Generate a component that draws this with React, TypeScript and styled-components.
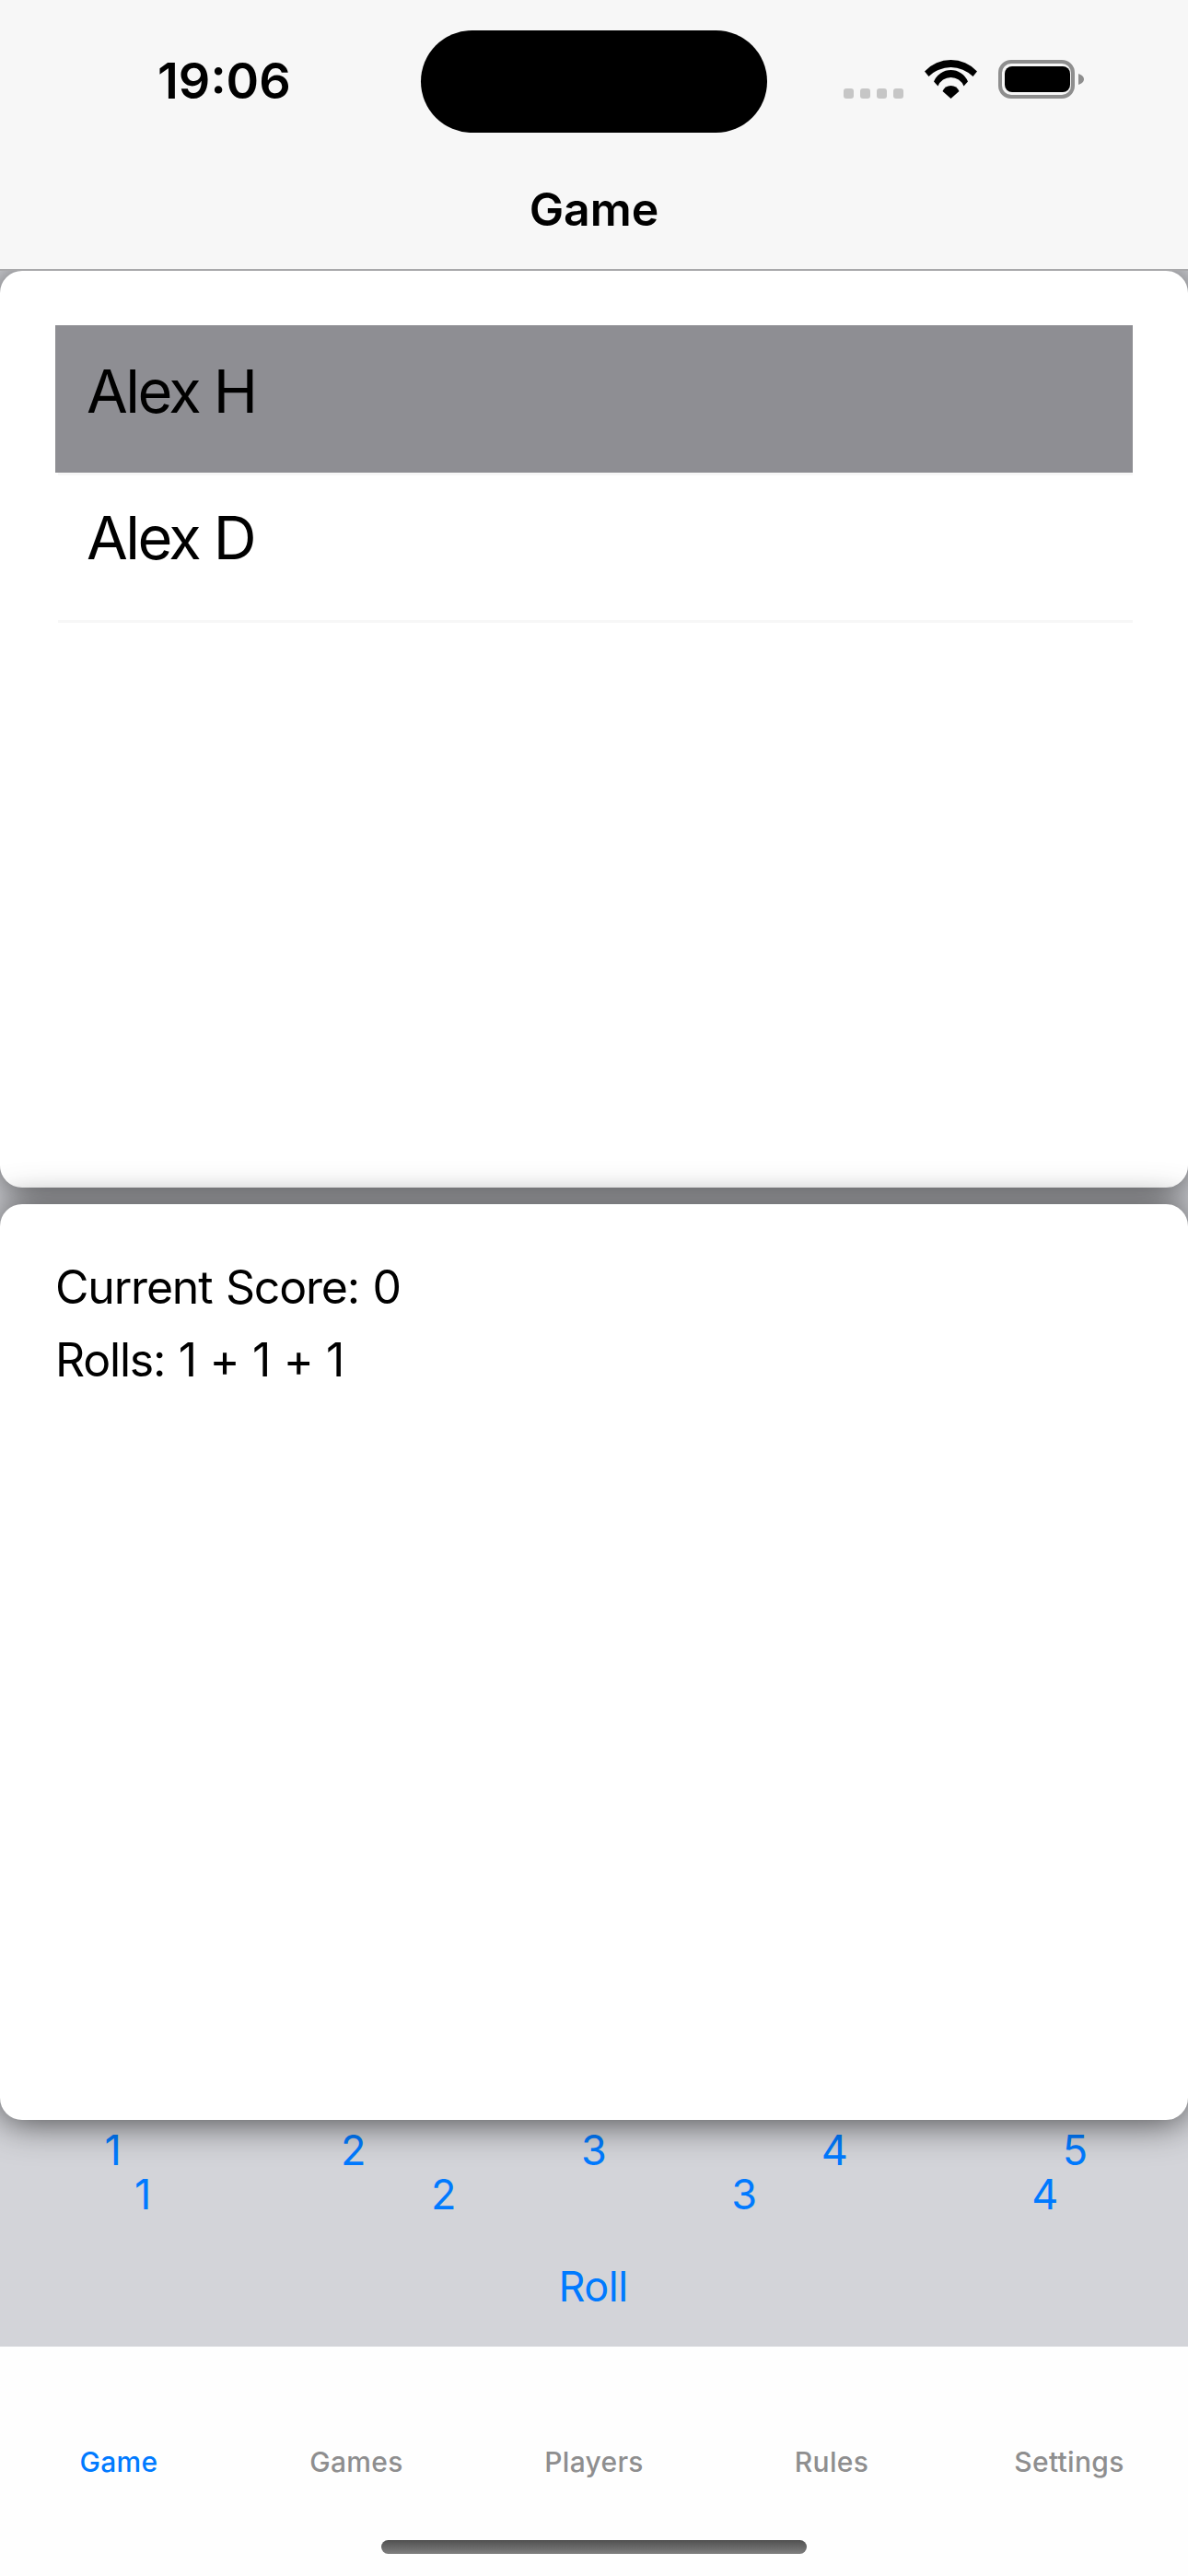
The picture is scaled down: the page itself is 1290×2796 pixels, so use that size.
import React from "react";
import styled, { createGlobalStyle } from "styled-components";

const GlobalStyle = createGlobalStyle`
  html, body {
    margin: 0;
    padding: 0;
    background: #d3d4d9;
    font-family: Inter, "Liberation Sans", sans-serif;
    overflow: hidden;
  }
`;

const Screen = styled.div`
  width: 1290px;
  height: 2796px;
  display: flex;
  flex-direction: column;
  overflow: hidden;
`;

const Header = styled.header`
  position: relative;
  z-index: 3;
  box-sizing: border-box;
  height: 294px;
  background-color: #f7f7f7;
  border-bottom: 2px solid #a9a9ab;
  padding-top: 33px;
`;

const StatusRow = styled.div`
  display: grid;
  grid-template-columns: 457px 376px 1fr;
  height: 111px;
`;

const Time = styled.div`
  padding: 22px 0 0 171px;
  font-size: 54px;
  line-height: 66px;
  font-weight: 600;
  color: #000;
`;

const Island = styled.div`
  background-color: #000;
  border-radius: 56px;
`;

const StatusIcons = styled.div`
  display: flex;
  align-items: flex-end;
  padding: 32px 0 37px 83px;
`;

const Dots = styled.div`
  display: flex;
  gap: 7px;
  margin-right: 23px;
`;

const Dot = styled.span`
  width: 11px;
  height: 11px;
  border-radius: 3px;
  background-color: #c6c6c6;
`;

const Wifi = styled.svg`
  width: 57px;
  height: 42px;
  margin-right: 23px;
`;

const Battery = styled.svg`
  width: 93px;
  height: 42px;
`;

const Title = styled.h1`
  margin: 53px 0 0;
  text-align: center;
  font-size: 50px;
  line-height: 60px;
  font-weight: 600;
  color: #000;
`;

const Cards = styled.main`
  display: flex;
  flex-direction: column;
  gap: 18px;
  background-color: #d3d4d9;
  position: relative;
  z-index: 2;
`;

const Card = styled.section<{ $height: number }>`
  box-sizing: border-box;
  height: ${(p) => p.$height}px;
  background-color: #fff;
  border-radius: 24px;
  box-shadow: 0 2px 40px rgba(0, 0, 0, 0.7);
`;

const PlayerList = styled.ul`
  list-style: none;
  margin: 0;
  padding: 59px 60px 0;
`;

const PlayerRow = styled.li<{ $selected?: boolean }>`
  box-sizing: border-box;
  height: ${(p) => (p.$selected ? 160 : 157)}px;
  padding: ${(p) => (p.$selected ? 32 : 28)}px 34px 0;
  font-size: 65px;
  line-height: 80px;
  letter-spacing: -2.6px;
  color: #000;
  background-color: ${(p) => (p.$selected ? "#8e8e93" : "transparent")};
`;

const Separator = styled.li`
  height: 3px;
  margin-left: 3px;
  background-color: #f7f7f7;
`;

const ScoreBlock = styled.div`
  padding: 51px 60px 0;
  font-size: 50px;
  line-height: 79px;
  letter-spacing: -1.2px;
  word-spacing: 1.7px;
  color: #000;
`;

const DiceArea = styled.div`
  height: 246px;
  padding-top: 9px;
  box-sizing: border-box;
`;

const DiceRow = styled.div<{ $count: number }>`
  width: 1306px;
  margin-left: -8px;
  display: grid;
  grid-template-columns: repeat(${(p) => p.$count}, 1fr);
`;

const DieButton = styled.span`
  text-align: center;
  font-size: 45px;
  line-height: 48px;
  color: #007aff;
`;

const RollButton = styled.div`
  margin-top: 52px;
  padding-right: 2px;
  text-align: center;
  font-size: 45px;
  line-height: 48px;
  letter-spacing: -0.5px;
  color: #007aff;
`;

const TabBar = styled.nav`
  flex: 1;
  background-color: #fefefe;
  display: flex;
  flex-direction: column;
  align-items: center;
  padding-top: 105px;
`;

const Tabs = styled.div`
  width: 1290px;
  display: grid;
  grid-template-columns: repeat(5, 258px);
`;

const Tab = styled.span<{ $active?: boolean }>`
  text-align: center;
  font-size: 30px;
  line-height: 40px;
  font-weight: 500;
  letter-spacing: 0.3px;
  color: ${(p) => (p.$active ? "#007aff" : "#8e8e8f")};
`;

const HomeIndicator = styled.div`
  margin-top: 65px;
  width: 462px;
  height: 15px;
  border-radius: 8px;
  background: linear-gradient(#505050, #7f7f7f);
`;

const App = () => {
  return (
    <Screen>
      <GlobalStyle />
      <Header>
        <StatusRow>
          <Time>19:06</Time>
          <Island />
          <StatusIcons>
            <Dots>
              <Dot />
              <Dot />
              <Dot />
              <Dot />
            </Dots>
            <Wifi viewBox="0 0 57 42">
              <path d="M0 12.5A39 39 0 0 1 57 12.5L52.5 18A34 34 0 0 0 4.5 18Z" />
              <path d="M10 23.5A20 20 0 0 1 47 23.5L42.5 28.5A15 15 0 0 0 14.5 28.5Z" />
              <path d="M19.5 34A9.75 9.75 0 0 1 37.5 34L28.5 42Z" />
            </Wifi>
            <Battery viewBox="0 0 93 42">
              <rect x="2" y="2" width="79" height="38" rx="12" fill="none" stroke="#8e8e8e" strokeWidth="4" />
              <rect x="7" y="7" width="71" height="28" rx="8" fill="#000" />
              <path d="M87 15C90 16 93 18 93 21C93 24 90 26 87 27Z" fill="#8e8e8e" />
            </Battery>
          </StatusIcons>
        </StatusRow>
        <Title>Game</Title>
      </Header>
      <Cards>
        <Card $height={995}>
          <PlayerList>
            <PlayerRow $selected>Alex H</PlayerRow>
            <Separator />
            <PlayerRow>Alex D</PlayerRow>
            <Separator />
          </PlayerList>
        </Card>
        <Card $height={994}>
          <ScoreBlock>
            <div>Current Score: 0</div>
            <div>Rolls: 1 + 1 + 1</div>
          </ScoreBlock>
        </Card>
      </Cards>
      <DiceArea>
        <DiceRow $count={5}>
          {[1, 2, 3, 4, 5].map((n) => (
            <DieButton key={n}>{n}</DieButton>
          ))}
        </DiceRow>
        <DiceRow $count={4}>
          {[1, 2, 3, 4].map((n) => (
            <DieButton key={n}>{n}</DieButton>
          ))}
        </DiceRow>
        <RollButton>Roll</RollButton>
      </DiceArea>
      <TabBar>
        <Tabs>
          <Tab $active>Game</Tab>
          <Tab>Games</Tab>
          <Tab>Players</Tab>
          <Tab>Rules</Tab>
          <Tab>Settings</Tab>
        </Tabs>
        <HomeIndicator />
      </TabBar>
    </Screen>
  );
};

export default App;
